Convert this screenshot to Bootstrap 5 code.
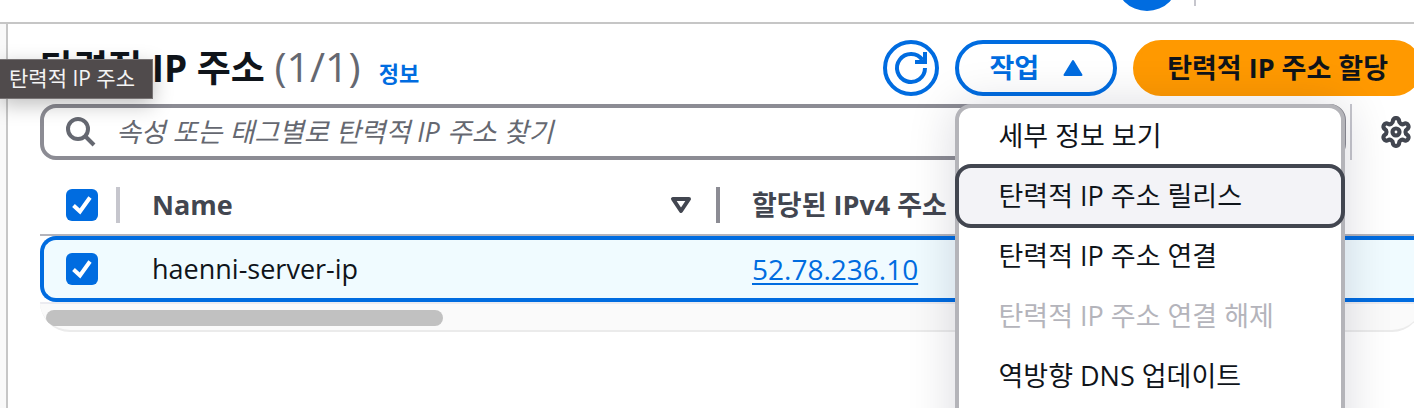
<!DOCTYPE html>
<html lang="ko">
<head>
<meta charset="utf-8">
<meta name="viewport" content="width=device-width, initial-scale=1">
<title>탄력적 IP 주소</title>
<link href="https://cdn.jsdelivr.net/npm/bootstrap@5.3.0/dist/css/bootstrap.min.css" rel="stylesheet">
<style>
  :root { --blue: #006ce0; --ink: #0f141a; --slate: #424650; --line: #c6c6cd; }
  body { font-family: "Open Sans", "Noto Sans CJK KR", sans-serif; font-size: 27px; line-height: 36px; color: var(--ink); }
  .top-bar { height: 24px; border-bottom: 2px solid #c6c6c6; padding-right: 218px; gap: 15px; }
  .avatar-dot { width: 64px; height: 64px; margin-bottom: 11px; background: var(--blue); }
  .top-rule { width: 2px; height: 22px; margin-bottom: 16px; background: var(--line); }
  .side-strip { width: 8px; background: #f9f9f9; border-right: 2px solid #c6c6c6; }
  .content-area { padding: 16px 0 0 32px; margin-right: -8px; }
  .title-row { height: 56px; }
  .page-title { font-size: 37px; line-height: 56px; font-weight: 700; }
  .page-title .count { font-size: 41px; line-height: 40px; font-weight: 400; color: #656871; }
  .info-link { font-size: 22px; line-height: 32px; font-weight: 700; color: var(--blue); margin-left: 18px; }
  .pill { height: 56px; border: 4px solid var(--blue); border-radius: 28px; color: var(--blue); background: #fff; font-weight: 700; padding: 0 30px; }
  .pill-round { width: 56px; padding: 0; }
  .pill-primary { background: #ff9900; border-color: #ff9900; color: var(--ink); }
  .search-box { height: 56px; border: 4px solid #8c8c94; border-radius: 16px; padding-left: 22px; gap: 18px; }
  .search-box input { font-style: italic; color: var(--ink); outline: 0; }
  .search-box input::placeholder { color: #656871; opacity: 1; }
  .tool-rule { width: 2px; height: 56px; background: var(--line); margin-left: 4px; }
  .gear-btn { width: 32px; margin: 0 10px 0 28px; }
  .action-menu { top: 64px; left: 0; width: 390px; height: 388px; border: 4px solid #b4b4b9; border-radius: 16px; box-shadow: 0 2px 48px 2px rgba(0, 7, 40, .14); z-index: 5; }
  .action-menu .dropdown-item { width: auto; height: 64px; margin: -4px -4px 0; padding: 0 39px; border: 4px solid transparent; border-radius: 16px; color: var(--ink); }
  .action-menu .dropdown-item.is-focused { border-color: var(--slate); background: #f3f3f7; }
  .action-menu .dropdown-item:disabled { color: #b4b4bb; }
  .grid-wrap { overflow: hidden; }
  .grid-table { width: calc(100% + 80px); table-layout: fixed; border-collapse: separate; border-spacing: 0; }
  .grid-table th { height: 76px; padding: 16px 32px 0; color: var(--slate); border-bottom: 2px solid #b4b4bb; }
  .grid-table td { height: 66px; padding: 0 32px; background: #f0fbff; border: solid var(--blue); border-width: 4px 0; }
  .grid-table td:first-child { border-left-width: 4px; border-radius: 16px 0 0 16px; padding: 0 0 0 22px; }
  .grid-table th:first-child { padding-left: 26px; padding-right: 0; }
  .grid-table a { font-size: 28px; color: var(--blue); text-underline-offset: 3px; text-decoration-thickness: 2px; }
  .col-check { width: 80px; }
  .col-name { width: 600px; }
  .col-rule { width: 4px; height: 36px; background: #8c8c94; }
  .col-rule.soft { background: var(--line); }
  .box-check.form-check-input { width: 32px; height: 32px; margin: 0; border: 0; border-radius: 6px; }
  .box-check.form-check-input:checked { background-color: var(--blue); background-size: 32px; background-image: url("data:image/svg+xml,%3csvg xmlns='http://www.w3.org/2000/svg' viewBox='0 0 32 32'%3e%3cpath d='M7.500 16.500L14 22.500L24 8.500' fill='none' stroke='white' stroke-width='4'/%3e%3c/svg%3e"); }
  .scroll-track { height: 30px; padding: 8px 6px; overflow: hidden; background: #fafafa; border-top: 2px solid #ebebf0; border-bottom: 2px solid #ebebeb; border-radius: 0 0 32px 32px; box-sizing: border-box; }
  .scroll-thumb { width: 29%; height: 16px; margin-top: -2px; background: #c1c1c1; }
  .name-tip { top: 59px; left: 0; height: 40px; padding: 0 17px 0 9px; background: #504b4c; border: 1px solid #777374; border-left: 0; color: #f4f4f4; font-size: 21px; line-height: 36px; box-shadow: 0 6px 20px rgba(0, 0, 0, .25); z-index: 6; }
</style>
</head>
<body>
<div class="vh-100 d-flex flex-column overflow-hidden position-relative">
  <header class="top-bar d-flex justify-content-end align-items-end overflow-hidden flex-shrink-0">
    <span class="avatar-dot rounded-circle flex-shrink-0"></span>
    <span class="top-rule"></span>
  </header>
  <div class="d-flex flex-grow-1">
    <div class="side-strip flex-shrink-0"></div>
    <main class="content-area flex-grow-1">
      <div class="title-row d-flex align-items-center gap-3 mb-2">
        <div class="d-flex align-items-baseline me-auto">
          <h1 class="page-title m-0">탄력적 IP 주소 <span class="count">(1/1)</span></h1>
          <a class="info-link text-decoration-none" href="#">정보</a>
        </div>
        <button class="pill pill-round d-flex align-items-center justify-content-center" type="button" aria-label="새로 고침">
          <svg width="36" height="36" viewBox="0 0 36 36" fill="none" stroke="currentColor" stroke-width="4"><path d="M32 18A14 14 0 1 1 29.500 10"/><path d="M32 2V12H22"/></svg>
        </button>
        <div class="position-relative">
          <button class="pill d-flex align-items-center" type="button" aria-expanded="true">작업
            <svg class="ms-4" width="20" height="18" viewBox="0 0 20 18"><path d="M10 2L18.500 16H1.500Z" fill="currentColor" stroke="currentColor" stroke-width="2" stroke-linejoin="round"/></svg>
          </button>
          <div class="action-menu position-absolute bg-white d-flex flex-column">
            <button class="dropdown-item" type="button">세부 정보 보기</button>
            <button class="dropdown-item is-focused" type="button">탄력적 IP 주소 릴리스</button>
            <button class="dropdown-item" type="button">탄력적 IP 주소 연결</button>
            <button class="dropdown-item" type="button" disabled>탄력적 IP 주소 연결 해제</button>
            <button class="dropdown-item" type="button">역방향 DNS 업데이트</button>
          </div>
        </div>
        <button class="pill pill-primary" type="button">탄력적 IP 주소 할당</button>
      </div>
      <div class="d-flex align-items-center">
        <label class="search-box d-flex align-items-center flex-grow-1">
          <svg class="flex-shrink-0" width="32" height="32" viewBox="0 0 32 32" fill="none" stroke="#656871" stroke-width="4"><circle cx="12" cy="13" r="10"/><path d="M19 20L28 29"/></svg>
          <input class="border-0 p-0 bg-transparent flex-grow-1" type="text" aria-label="찾기" placeholder="속성 또는 태그별로 탄력적 IP 주소 찾기">
        </label>
        <span class="tool-rule"></span>
        <button class="gear-btn btn p-0 border-0 d-flex" type="button" aria-label="설정">
          <svg width="32" height="32" viewBox="0.5 0.5 23 23" fill="none" stroke="#424650" stroke-width="3" stroke-linejoin="round"><path d="M12.220 2h-.44a2 2 0 0 0-2 2v.18a2 2 0 0 1-1 1.730l-.43.25a2 2 0 0 1-2 0l-.15-.08a2 2 0 0 0-2.730.73l-.22.38a2 2 0 0 0 .73 2.730l.15.1a2 2 0 0 1 1 1.720v.51a2 2 0 0 1-1 1.740l-.15.09a2 2 0 0 0-.73 2.730l.22.38a2 2 0 0 0 2.730.73l.15-.08a2 2 0 0 1 2 0l.43.25a2 2 0 0 1 1 1.730V20a2 2 0 0 0 2 2h.44a2 2 0 0 0 2-2v-.18a2 2 0 0 1 1-1.730l.43-.25a2 2 0 0 1 2 0l.15.08a2 2 0 0 0 2.730-.73l.22-.39a2 2 0 0 0-.73-2.730l-.15-.08a2 2 0 0 1-1-1.740v-.5a2 2 0 0 1 1-1.740l.15-.09a2 2 0 0 0 .73-2.730l-.22-.38a2 2 0 0 0-2.730-.73l-.15.08a2 2 0 0 1-2 0l-.43-.25a2 2 0 0 1-1-1.730V4a2 2 0 0 0-2-2z"/><circle cx="12" cy="12" r="2.500"/></svg>
        </button>
      </div>
      <div class="grid-wrap">
        <table class="grid-table">
          <colgroup><col class="col-check"><col class="col-name"><col></colgroup>
          <thead>
            <tr>
              <th><div class="d-flex align-items-center justify-content-between"><input class="form-check-input box-check" type="checkbox" aria-label="모두 선택" checked><span class="col-rule soft"></span></div></th>
              <th class="pe-0"><div class="d-flex align-items-center"><span class="me-auto">Name</span>
                <svg class="me-4" width="22" height="20" viewBox="0 0 22 20"><path d="M3 4H19L11 16Z" fill="none" stroke="#424650" stroke-width="4" stroke-linejoin="round"/></svg>
                <span class="col-rule"></span></div></th>
              <th>할당된 IPv4 주소</th>
            </tr>
          </thead>
          <tbody>
            <tr>
              <td><div class="d-flex"><input class="form-check-input box-check" type="checkbox" aria-label="haenni-server-ip 선택" checked></div></td>
              <td>haenni-server-ip</td>
              <td><a href="#">52.78.236.10</a></td>
            </tr>
          </tbody>
        </table>
        <div class="scroll-track"><div class="scroll-thumb rounded-pill"></div></div>
      </div>
    </main>
  </div>
  <div class="name-tip position-absolute" role="tooltip">탄력적 IP 주소</div>
</div>
<script src="https://cdn.jsdelivr.net/npm/bootstrap@5.3.0/dist/js/bootstrap.bundle.min.js"></script>
</body>
</html>
